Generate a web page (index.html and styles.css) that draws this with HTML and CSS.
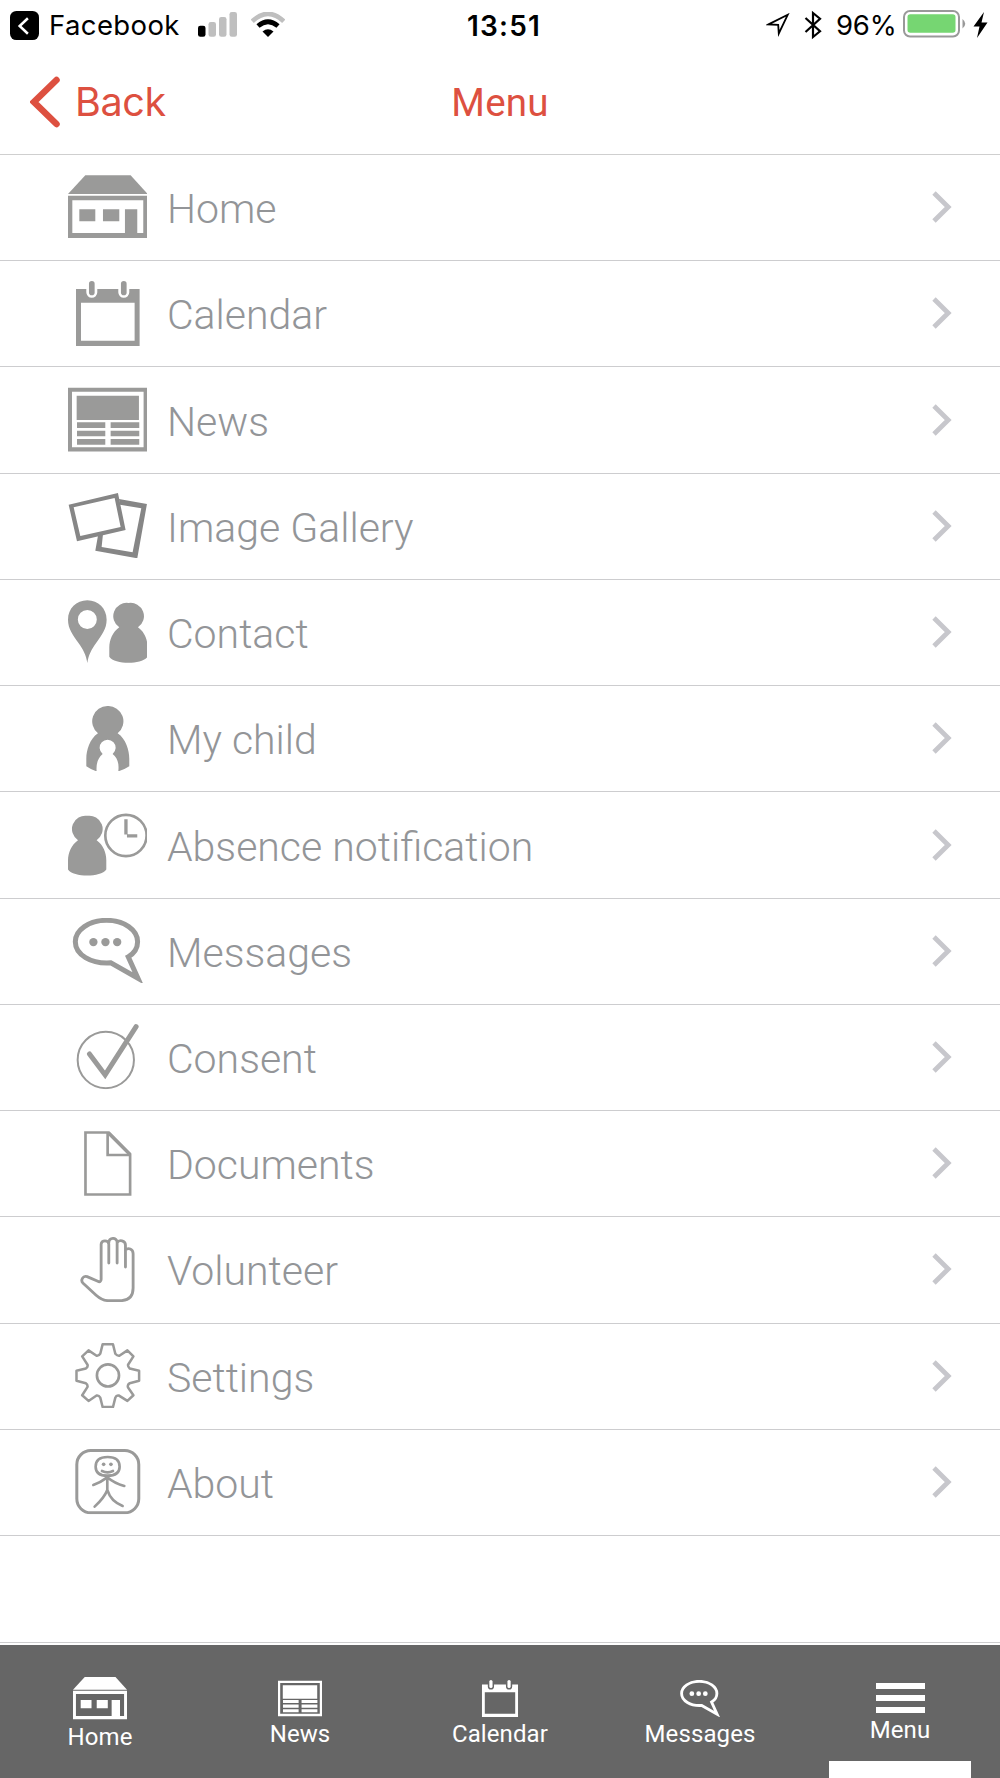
FILE: index.html
```html
<!DOCTYPE html>
<html lang="en">
<head>
<meta charset="utf-8">
<title>Menu</title>
<link rel="stylesheet" href="styles.css">
</head>
<body>
<svg class="sprite" width="0" height="0" aria-hidden="true">
  <symbol id="home" viewBox="53 76 239 188">
    <path fill="currentColor" d="M105 76H241L292 132H53Z"/>
    <path fill="currentColor" fill-rule="evenodd" d="M53 137H292V264H53ZM66 151V249H224V178H261V249H279V151Z"/>
    <path fill="currentColor" d="M87 178h48v36h-48zM158 178h49v36h-49z"/>
  </symbol>
  <symbol id="calendar" viewBox="77 391 191 196">
    <path fill="currentColor" fill-rule="evenodd" d="M77 415H108V425A16.500 16.500 0 0 0 141 425V415H204V425A16.500 16.500 0 0 0 237 425V415H268V587H77ZM92 456V570H253V456Z"/>
    <rect x="116" y="391" width="17" height="43" rx="8.500" fill="currentColor"/>
    <rect x="212" y="391" width="17" height="43" rx="8.500" fill="currentColor"/>
  </symbol>
  <symbol id="news" viewBox="53 711 239 192">
    <path fill="currentColor" fill-rule="evenodd" d="M53 711H292V903H53ZM65 723V890H280V723Z"/>
    <path fill="currentColor" d="M79 735h187v73h-187zM80 815h85v17h-85zM181 815h86v17h-86zM80 840h85v17h-85zM181 840h86v17h-86zM80 865h85v17h-85zM181 865h86v17h-86z"/>
  </symbol>
  <symbol id="gallery" viewBox="55 68 235 196">
    <path fill="currentColor" fill-rule="evenodd" d="M55 103L203 68L226 179L80 213ZM70 111L90 197L211 170L193 83Z"/>
    <path fill="currentColor" d="M206 86L290 101L261 264L135 241L143 196L158 192L154 230L247 246L273 114L209 103Z"/>
  </symbol>
  <symbol id="contact" viewBox="53 391 239 188">
    <path fill="currentColor" fill-rule="evenodd" d="M111 391C78 391 53 416 53 449C53 477 68 495 84 518C99 540 107 553 111 579C115 553 123 540 138 518C154 495 169 477 169 449C169 416 144 391 111 391ZM111 420A28 28 0 1 1 111 477A28 28 0 1 1 111 420Z"/>
    <path fill="currentColor" d="M235 399A40 40 0 0 1 263 472C283 486 292 510 292 532V560C275 585 193 584 177 560V532C177 510 187 486 207 472A40 40 0 0 1 235 399Z"/>
  </symbol>
  <symbol id="child" viewBox="107 707 131 196">
    <path fill="currentColor" d="M172 707A46 46 0 0 1 202 789C227 806 237 840 237 865V888Q222 898 204 903C207 879 201 862 187 851A24 24 0 1 0 157 851C143 863 137 880 139 903Q124 899 108 888V865C108 840 118 806 143 789A46 46 0 0 1 172 707Z"/>
  </symbol>
  <symbol id="absence" viewBox="53 69 239 187">
    <path fill="currentColor" d="M111 76A40 40 0 0 1 139 149C159 163 168 187 168 209V237C151 262 69 261 53 237V209C53 187 63 163 83 149A40 40 0 0 1 111 76Z"/>
    <circle cx="227" cy="135" r="62" fill="none" stroke="currentColor" stroke-width="8"/>
    <path fill="none" stroke="currentColor" stroke-width="10" d="M227 86V132M230 136H261"/>
  </symbol>
  <symbol id="messages" viewBox="68 384 208 195">
    <path fill="none" stroke="currentColor" stroke-width="15" stroke-miterlimit="8" d="M181 518C121 522 75 493 75 455C75 420 116 391 168 391C221 391 261 420 261 455C261 473 250 490 233 500L262 564Z"/>
    <circle cx="129" cy="456" r="12.500" fill="currentColor"/><circle cx="165" cy="456" r="12.500" fill="currentColor"/><circle cx="200" cy="456" r="12.500" fill="currentColor"/>
  </symbol>
  <symbol id="consent" viewBox="80 702 186 196">
    <circle cx="167" cy="810" r="84.500" fill="none" stroke="currentColor" stroke-width="6"/>
    <path fill="none" stroke="currentColor" stroke-width="15" stroke-linecap="round" d="M118 792L165 855L258 710"/>
  </symbol>
  <symbol id="documents" viewBox="101 62 142 196">
    <path fill="none" stroke="currentColor" stroke-width="8" d="M105 66.500H175L239 131V252.500H105ZM171.500 66V134H240"/>
    <path fill="none" stroke="currentColor" stroke-width="10" d="M175 69L238 132"/>
  </symbol>
  <symbol id="hand" viewBox="92 380 162 196">
    <path fill="none" stroke="currentColor" stroke-width="8.500" stroke-linecap="round" stroke-linejoin="round" d="M176 458V402C176 388 153 388 153 402V507C153 514 149 516 143 513L111 499C98 495 90 510 99 519L138 555Q156 571 174 571H215Q249 568 249 533V430C249 415 234 411 226 419M176 398C175 380 201 380 201 396V458M201 397C207 387 226 390 226 404V470"/>
  </symbol>
  <symbol id="gear" viewBox="75 69 195 195">
    <path fill="none" stroke="currentColor" stroke-width="7.500" stroke-linejoin="round" d="M157 73H188L195 101Q201 108 207 107L231 91L249 109L233 134Q232 140 238 145L266 152V182L238 189Q230 194 233 202L249 225L231 242L206 226Q198 224 195 232L188 260H157L150 232Q146 225 139 226L115 242L96 225L112 200Q113 193 107 189L79 182V152L107 145Q114 140 112 134L96 109L115 91L139 107Q146 108 150 101Z"/>
    <circle cx="173" cy="166" r="33" fill="none" stroke="currentColor" stroke-width="8"/>
  </symbol>
  <symbol id="about" viewBox="75 387 195 196">
    <rect x="79.500" y="391.500" width="186" height="187" rx="42" fill="none" stroke="currentColor" stroke-width="9"/>
    <g fill="none" stroke="currentColor" stroke-width="8" stroke-linecap="round" stroke-linejoin="round">
      <path d="M172 411C149 411 136 421 136 440C136 459 149 467 171 467C196 467 208 459 208 440C208 421 196 411 172 411Z"/>
      <path d="M155 453Q172 461 188 453M171 470V510M171 472Q151 487 129 495M171 472Q192 490 222 498M171 510C162 533 146 548 133 560M171 510C178 533 196 550 217 558"/>
    </g>
    <circle cx="160" cy="433" r="5.500" fill="currentColor"/><circle cx="182" cy="433" r="5.500" fill="currentColor"/>
  </symbol>
  <symbol id="chevron" viewBox="0 0 20 34">
    <path fill="none" stroke="currentColor" stroke-width="4.800" d="M2 3L16.200 17L2 31"/>
  </symbol>
</svg>

<header class="status">
  <div class="status-left">
    <svg class="return" viewBox="0 0 30 30"><rect width="30" height="30" rx="6.500"/><path d="M18.500 7.500L10 15.500L18.500 23.500" fill="none" stroke="#fff" stroke-width="2.600"/></svg>
    <span class="app">Facebook</span>
    <svg class="signal" viewBox="0 0 39 25"><rect y="13.700" width="7.500" height="11" rx="2.300"/><g fill="#bfbfbf"><rect x="10.500" y="10" width="7.500" height="14.700" rx="2.300"/><rect x="21" y="5" width="7.500" height="19.700" rx="2.300"/><rect x="31.500" width="7.500" height="24.700" rx="2.300"/></g></svg>
    <svg class="wifi" viewBox="0 0 34 25"><path d="M1.300 9.300Q17-5.500 32.700 9.300" fill="none" stroke="#bfbfbf" stroke-width="4.600"/><path d="M7 14Q17 5.500 27 14" fill="none" stroke="#000" stroke-width="4.800"/><path d="M11.500 19.500Q17 14.800 22.500 19.500L17 25Z"/></svg>
  </div>
  <time class="clock">13:51</time>
  <div class="status-right">
    <svg class="location" viewBox="0 0 24 24"><path d="M2.500 11.400L21.700 1.800L12.800 20.500L12.200 11.900Z" fill="none" stroke="#000" stroke-width="1.800"/></svg>
    <svg class="bluetooth" viewBox="0 0 18 30"><path d="M1.500 8L16 21.300L9 27V3L16 8.700L1.500 22" fill="none" stroke="#000" stroke-width="2.200"/></svg>
    <span class="percent">96%</span>
    <svg class="battery" viewBox="0 0 64 28"><rect x="1" y="1" width="55" height="25.500" rx="6" fill="#fff" stroke="#999" stroke-width="2"/><rect x="4.500" y="4.300" width="48" height="18.500" rx="2.800" fill="#76d672"/><path d="M59.500 9Q65 13.500 59.500 18.500Z" fill="#999"/></svg>
    <svg class="bolt" viewBox="0 0 15 26"><path d="M11 0L.5 14.500H6.500L4 26L14.500 10.500H8.500Z"/></svg>
  </div>
</header>

<nav class="titlebar">
  <a class="back"><svg viewBox="0 0 30 52"><path d="M26.500 4L4 26L26.500 48" fill="none" stroke="currentColor" stroke-width="6.500" stroke-linecap="round" stroke-linejoin="miter"/></svg><span>Back</span></a>
  <h1>Menu</h1>
</nav>

<main>
  <ul class="menu">
    <li><svg class="icon"><use href="#home"/></svg><span>Home</span><svg class="chevron"><use href="#chevron"/></svg></li>
    <li><svg class="icon"><use href="#calendar"/></svg><span>Calendar</span><svg class="chevron"><use href="#chevron"/></svg></li>
    <li><svg class="icon"><use href="#news"/></svg><span>News</span><svg class="chevron"><use href="#chevron"/></svg></li>
    <li><svg class="icon dark"><use href="#gallery"/></svg><span>Image Gallery</span><svg class="chevron"><use href="#chevron"/></svg></li>
    <li><svg class="icon"><use href="#contact"/></svg><span>Contact</span><svg class="chevron"><use href="#chevron"/></svg></li>
    <li><svg class="icon"><use href="#child"/></svg><span>My child</span><svg class="chevron"><use href="#chevron"/></svg></li>
    <li><svg class="icon"><use href="#absence"/></svg><span>Absence notification</span><svg class="chevron"><use href="#chevron"/></svg></li>
    <li><svg class="icon"><use href="#messages"/></svg><span>Messages</span><svg class="chevron"><use href="#chevron"/></svg></li>
    <li><svg class="icon"><use href="#consent"/></svg><span>Consent</span><svg class="chevron"><use href="#chevron"/></svg></li>
    <li><svg class="icon"><use href="#documents"/></svg><span>Documents</span><svg class="chevron"><use href="#chevron"/></svg></li>
    <li><svg class="icon"><use href="#hand"/></svg><span>Volunteer</span><svg class="chevron"><use href="#chevron"/></svg></li>
    <li><svg class="icon"><use href="#gear"/></svg><span>Settings</span><svg class="chevron"><use href="#chevron"/></svg></li>
    <li><svg class="icon"><use href="#about"/></svg><span>About</span><svg class="chevron"><use href="#chevron"/></svg></li>
  </ul>
</main>

<footer class="tabs">
  <a class="tab tab-home"><svg><use href="#home"/></svg><span>Home</span></a>
  <a class="tab"><svg><use href="#news"/></svg><span>News</span></a>
  <a class="tab"><svg><use href="#calendar"/></svg><span>Calendar</span></a>
  <a class="tab"><svg><use href="#messages"/></svg><span>Messages</span></a>
  <a class="tab tab-menu"><i class="bars"></i><span>Menu</span><b class="marker"></b></a>
</footer>
</body>
</html>
```
FILE: styles.css
```css
* { box-sizing: border-box; }

body {
  margin: 0;
  width: 1000px;
  height: 1778px;
  display: flex;
  flex-direction: column;
  overflow: hidden;
  background: #fff;
  color: #000;
  font-family: Roboto, "Liberation Sans", sans-serif;
}

svg { display: block; flex: none; }
.sprite { position: absolute; }

.status {
  height: 50px;
  flex: none;
  display: grid;
  grid-template-columns: 1fr auto 1fr;
  padding: 0 12px 0 10px;
  font: 400 27.5px/51px Inter, "Liberation Sans", sans-serif;
}
.status-left, .status-right { display: flex; align-items: flex-start; }
.status-right { justify-content: flex-end; }
.return { width: 29px; height: 29px; margin-top: 11px; }
.app { width: 130px; margin-left: 10px; letter-spacing: 0.4px; }
.signal { width: 39px; height: 25px; margin: 12px 0 0 19px; }
.wifi { width: 34px; height: 25px; margin: 12px 0 0 14px; }
.clock { padding-left: 10px; font-size: 28px; font-weight: 600; line-height: 52px; letter-spacing: 1.2px; }
.location { width: 24px; height: 24px; margin: 13px 14px 0 0; }
.bluetooth { width: 18px; height: 30px; margin: 10px 14px 0 0; }
.percent { width: 60px; margin-right: 7px; letter-spacing: -0.2px; }
.battery { width: 64px; height: 28px; margin: 10px 6px 0 0; }
.bolt { width: 15px; height: 26px; margin-top: 12px; }

.titlebar {
  height: 105px;
  flex: none;
  display: grid;
  grid-template-columns: 1fr auto 1fr;
  border-bottom: 1px solid #cfcfcf;
  color: #dd5040;
}
.back { display: flex; align-items: flex-start; padding-left: 30px; }
.back svg { width: 30px; height: 52px; margin-top: 26px; }
.back span { margin-left: 15px; font: 400 39.5px/104px Inter, "Liberation Sans", sans-serif; letter-spacing: -0.4px; }
h1 { margin: 0; font-size: 38.5px; font-weight: 400; line-height: 106px; letter-spacing: 0.2px; }

.menu { margin: 0; padding: 0; list-style: none; }
.menu li {
  height: 106.24px;
  display: flex;
  align-items: center;
  padding: 0 48px 1px 67.6px;
  border-bottom: 1px solid #cdcdcf;
  color: #9a9a99;
}
.icon { width: 79.6px; height: 65.3px; }
.icon.dark { color: #868686; }
.menu span {
  flex: 1;
  margin-left: 19.8px;
  padding-top: 4px;
  font-size: 41px;
  font-weight: 300;
  line-height: 48px;
  color: #939598;
}
.chevron { width: 20px; height: 34px; color: #c7c7cc; }

.tabs {
  margin-top: auto;
  height: 136px;
  flex: none;
  display: grid;
  grid-template-columns: repeat(5, 1fr);
  border-top: 1px solid #cdcdcf;
  background: linear-gradient(#fff 2px, #666 2px);
  color: #fff;
}
.tab { position: relative; display: flex; flex-direction: column; align-items: center; padding-top: 37px; font-size: 24px; line-height: 28px; letter-spacing: 0.1px; }
.tab svg { width: 44px; height: 37px; }
.tab span { margin-top: 3px; }
.tab-home { padding-top: 34px; }
.tab-home svg { width: 54px; height: 42.5px; }
.bars { width: 49px; height: 30px; margin-top: 3px; background: repeating-linear-gradient(#fff 0 6px, transparent 6px 11.8px); }
.marker { position: absolute; left: 29px; bottom: 0; width: 142px; height: 17px; background: #fff; }
```
